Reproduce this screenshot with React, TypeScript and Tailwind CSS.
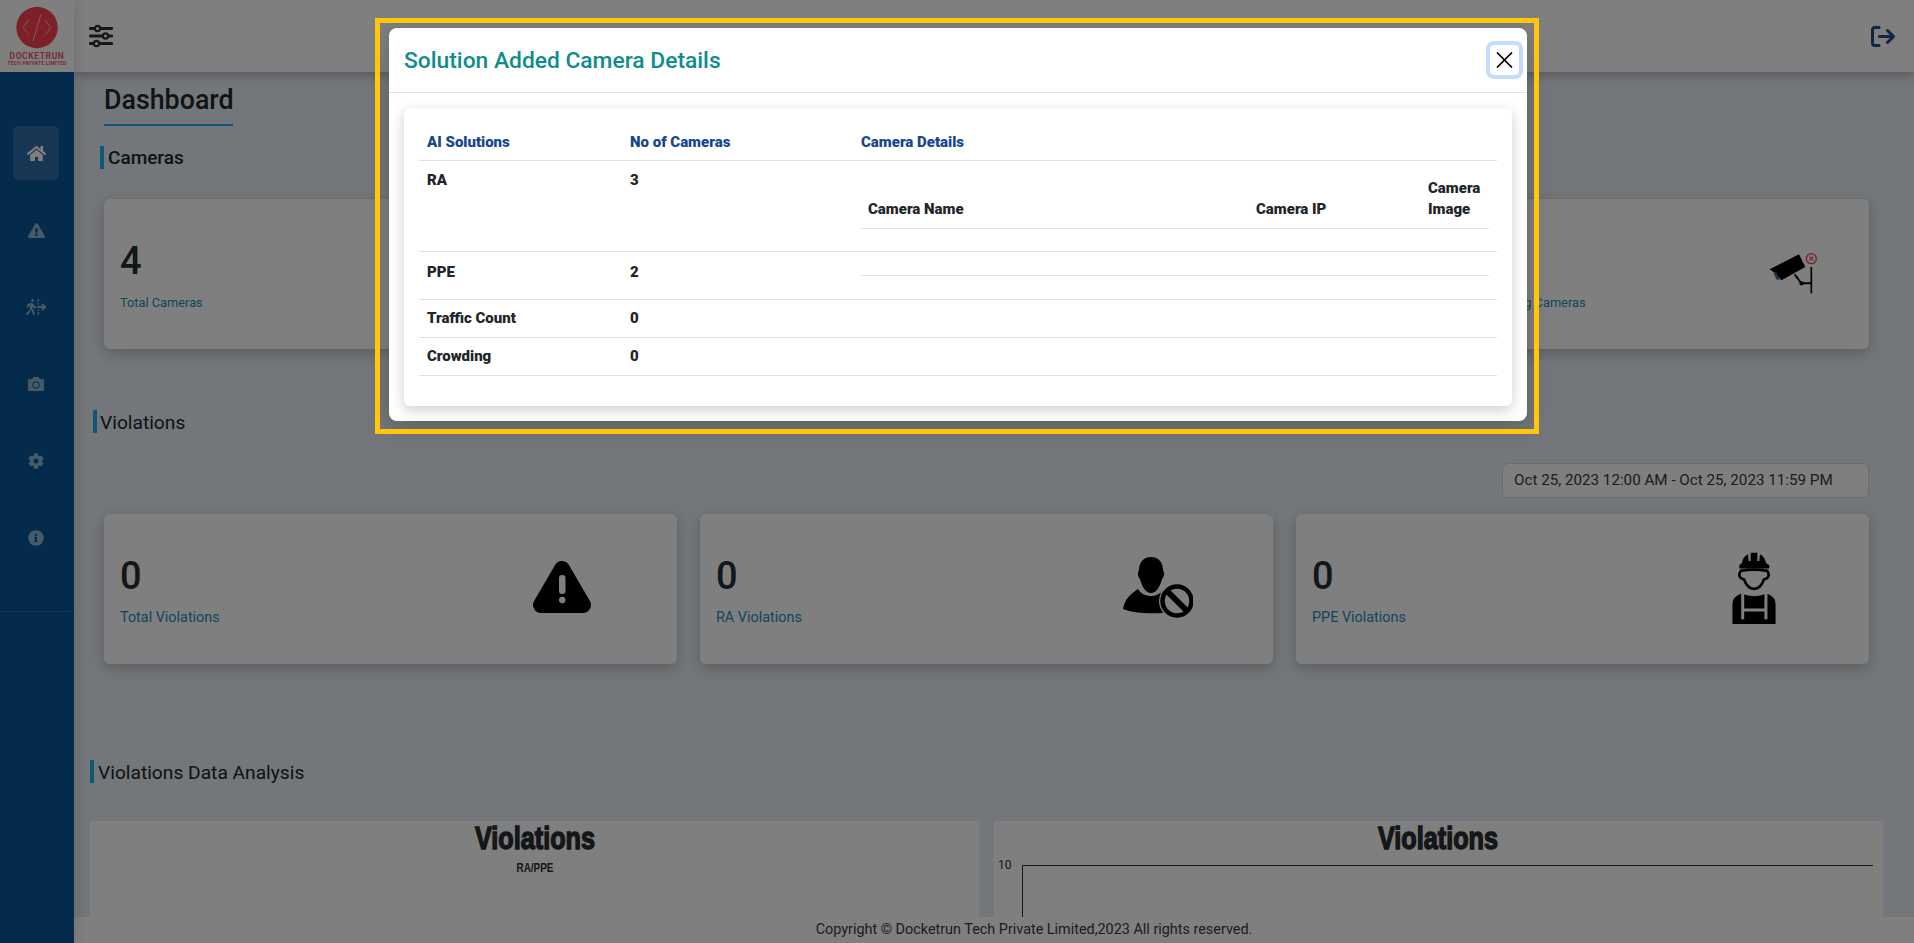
import React from "react";
import { FaHome, FaExclamationTriangle, FaCamera, FaCog, FaInfoCircle } from "react-icons/fa";
import { FaPersonWalkingDashedLineArrowRight } from "react-icons/fa6";

const font = { fontFamily: "Roboto, 'Liberation Sans', sans-serif" };

function Logo() {
  return (
    <div className="h-[72px] bg-white flex flex-col items-center overflow-hidden">
      <svg width="42" height="43" viewBox="0 0 42 43" className="mt-[6px] shrink-0">
        <circle cx="21" cy="21.5" r="20.7" fill="#fa4050" />
        <path d="M13 14 L7 21.5 L13 29 M29 14 L35 21.5 L29 29 M25 8 L17 35" fill="none" stroke="#fbb" strokeWidth="1" />
      </svg>
      <div className="text-[8.5px] leading-[9px] font-bold tracking-[0.6px] text-[#f0566a] mt-[3px] whitespace-nowrap">DOCKETRUN</div>
      <div className="text-[5px] leading-[5px] font-bold tracking-[0.25px] text-[#f0566a] whitespace-nowrap">TECH PRIVATE LIMITED</div>
    </div>
  );
}

function Sidebar() {
  const cls = "w-[46px] h-[54px] flex items-center justify-center rounded-md";
  return (
    <aside className="w-[74px] shrink-0 bg-[#085498] relative z-20 shadow-[2px_0_14px_rgba(0,0,0,0.12)] flex flex-col">
      <Logo />
      <nav className="pt-[54px] pl-[13px] flex flex-col gap-[23px]">
        <div className={cls + " bg-white/15 text-white"}><FaHome size={19} /></div>
        <div className={cls + " text-white/55"}><FaExclamationTriangle size={17} /></div>
        <div className={cls + " text-white/55"}><FaPersonWalkingDashedLineArrowRight size={20} /></div>
        <div className={cls + " text-white/55"}><FaCamera size={16} /></div>
        <div className={cls + " text-white/55"}><FaCog size={16} /></div>
        <div className={cls + " text-white/55"}><FaInfoCircle size={16} /></div>
      </nav>
      <div className="mt-[46px] border-t border-white/15" />
    </aside>
  );
}

function SectionTitle({ children, className }: { children: React.ReactNode; className: string }) {
  return (
    <div className={"flex items-center h-[23px] border-l-4 border-[#1eb0e8] leading-[23px] text-[#202428] " + className}>
      {children}
    </div>
  );
}

function WarningIcon() {
  return (
    <svg width="58" height="52" viewBox="0 0 58 52">
      <path d="M29 8 L8 44 L50 44 Z" fill="#000" stroke="#000" strokeWidth="16" strokeLinejoin="round" />
      <rect x="26" y="14" width="6.5" height="19" rx="3" fill="#fff" />
      <circle cx="29.2" cy="39" r="3.2" fill="#fff" />
    </svg>
  );
}

function PersonBanIcon() {
  return (
    <svg width="70" height="61" viewBox="0 0 70 61">
      <path d="M28 0 C36 0 40 6 40 13 C42 16 41 20 39 22 C37 30 33 36 28 36 C23 36 19 30 17 22 C15 20 14 16 16 13 C16 6 20 0 28 0 Z" fill="#000" />
      <path d="M0 52 C2 41 8 37 15 32 C18 37 23 39 28 39 C33 39 37 37 40 33 C44 36 48 38 50 40 L40 56 C25 57 10 56 0 52 Z" fill="#000" />
      <ellipse cx="54" cy="44" rx="18" ry="18.5" fill="#fff" />
      <ellipse cx="54" cy="44" rx="14.5" ry="14.5" fill="#fff" stroke="#000" strokeWidth="4.5" />
      <path d="M44 34 L64 54" stroke="#000" strokeWidth="6" />
    </svg>
  );
}

function WorkerIcon() {
  return (
    <svg width="44" height="72" viewBox="67 35 130 217">
      <path d="M88 85 L178 85 L178 75 Q172 70 168 68 Q165 50 150 42 L148 62 L142 62 L142 37 L122 37 L122 62 L116 62 L114 42 Q98 50 96 68 Q90 72 88 75 Z" fill="#000" />
      <path d="M92 92 Q80 112 102 118 Q112 146 132 146 Q152 146 162 118 Q184 112 172 92 Q132 84 92 92 Z" fill="none" stroke="#000" strokeWidth="8" />
      <path d="M67 252 V190 Q67 170 95 160 Q132 176 170 160 Q197 170 197 190 V252 Z" fill="#000" />
      <path d="M98 155 V238 M168 155 V238 M98 210 H168" fill="none" stroke="#fff" strokeWidth="9" />
    </svg>
  );
}

function CameraIcon() {
  return (
    <svg width="50" height="44" viewBox="25 30 150 132">
      <path d="M30 85 L118 40 L137 78 L65 118 L45 95 Z" fill="#000" />
      <path d="M42 97 L50 94 L60 118 L50 115 Z" fill="#2a6cb0" />
      <path d="M105 100 L125 127 L155 127" fill="none" stroke="#000" strokeWidth="6" />
      <circle cx="126" cy="127" r="6.5" fill="#000" />
      <path d="M155 78 V157" stroke="#000" strokeWidth="5" />
      <circle cx="155" cy="53" r="15" fill="none" stroke="#f04050" strokeWidth="4" />
      <path d="M149 47 L161 59 M161 47 L149 59" stroke="#f04050" strokeWidth="3.5" />
    </svg>
  );
}

function StatCard({ value, label, small, icon, iconClass }: { value?: string; label?: string; small?: boolean; icon?: React.ReactNode; iconClass?: string }) {
  return (
    <div className="h-[150px] bg-white rounded-md shadow-[0_4px_14px_rgba(0,0,0,0.22)] flex justify-between items-start pl-[16px]">
      <div>
        <div className="text-[38px] leading-[48px] pt-[38px] box-content h-[48px] font-medium text-[#282c30]">{value}</div>
        <div className={(small ? "text-[12.8px]" : "text-[14.4px]") + " mt-[8px] leading-[20px] text-[#1e8cb8] whitespace-nowrap"}>{label}</div>
      </div>
      {icon && <div className={iconClass}>{icon}</div>}
    </div>
  );
}

function ChartTitle({ x }: { x: number }) {
  return (
    <text x={x} y="28" textAnchor="middle" fontFamily="'Liberation Sans', sans-serif" fontWeight="700" fontSize="31" textLength="120" lengthAdjust="spacingAndGlyphs" stroke="#282c30" strokeWidth="1.4" fill="#282c30">
      Violations
    </text>
  );
}

function Content() {
  return (
    <div className="flex-1 min-h-0 overflow-hidden pr-[45px]">
      <div className="ml-[30px] mt-[10px] w-[129px] h-[44px] border-b-2 border-[#1eb0e8] text-[26.8px] leading-[36px] font-medium text-[#23272b] whitespace-nowrap">Dashboard</div>

      <SectionTitle className="ml-[26px] mt-[20px] pl-[4px] font-medium text-[19px]">Cameras</SectionTitle>
      <div className="ml-[30px] mt-[30px] grid grid-cols-4 gap-[23px]">
        <StatCard value="4" label="Total Cameras" small />
        <StatCard />
        <StatCard />
        <StatCard label="Not Working Cameras" small icon={<CameraIcon />} iconClass="mr-[51px] mt-[52px]" />
      </div>

      <SectionTitle className="ml-[19px] mt-[61px] pl-[3px] pt-[2px] text-[19.2px]">Violations</SectionTitle>

      <div className="flex justify-end mt-[30px]">
        <div className="w-[367px] h-[35px] bg-white border border-[#d5d8dc] rounded-md flex items-center pl-[11px] text-[15.2px] text-[#343a40] whitespace-nowrap">
          Oct 25, 2023 12:00 AM - Oct 25, 2023 11:59 PM
        </div>
      </div>

      <div className="ml-[30px] mt-[16px] grid grid-cols-3 gap-[23px]">
        <StatCard value="0" label="Total Violations" icon={<WarningIcon />} iconClass="mr-[86px] mt-[47px]" />
        <StatCard value="0" label="RA Violations" icon={<PersonBanIcon />} iconClass="mr-[80px] mt-[43px]" />
        <StatCard value="0" label="PPE Violations" icon={<WorkerIcon />} iconClass="mr-[93px] mt-[38px]" />
      </div>

      <SectionTitle className="ml-[16px] mt-[96px] pl-[4px] pt-[2px] text-[19.2px]">Violations Data Analysis</SectionTitle>

      <div className="ml-[16px] -mr-[14px] mt-[38px] flex gap-[15px]">
        <div className="w-[889px] h-[200px] bg-white">
          <svg width="889" height="200" viewBox="0 0 889 200">
            <ChartTitle x={445} />
            <text x="445" y="51" textAnchor="middle" fontFamily="'Liberation Sans', sans-serif" fontWeight="700" fontSize="12" textLength="37" lengthAdjust="spacingAndGlyphs" fill="#282c30">RA/PPE</text>
          </svg>
        </div>
        <div className="w-[889px] h-[200px] bg-white">
          <svg width="889" height="200" viewBox="0 0 889 200">
            <ChartTitle x={444} />
            <text x="4" y="48" fontFamily="Roboto, sans-serif" fontSize="12" fill="#282c30">10</text>
            <path d="M28.5 44.5 H879" stroke="#333" strokeWidth="1" fill="none" />
            <path d="M28.5 44 V200" stroke="#333" strokeWidth="1" fill="none" />
          </svg>
        </div>
      </div>
    </div>
  );
}

function CameraModal() {
  const th = "h-[38px] border-b border-[#dee2e6] px-2 pt-[2px] align-middle text-left font-black text-[15px] leading-[21px] text-[#14478f]";
  const td = "border-b border-[#dee2e6] px-2 align-top font-black text-[15px] leading-[21px] text-[#212529]";
  const nth = "h-[60px] border-b border-[#dee2e6] py-2 pl-[7px] pr-0 align-bottom text-left font-black text-[15px] leading-[21px] text-[#212529]";
  return (
    <div className="absolute left-[389px] top-[28px] w-[1138px] h-[393px] bg-white rounded-lg z-40 flex flex-col shadow-[0_6px_24px_rgba(0,0,0,0.2)]">
      <div className="h-[65px] shrink-0 border-b border-[#dee2e6] flex items-center justify-between pl-[15px] pr-[4px]">
        <h5 className="text-[22.8px] leading-[30px] pt-[1px] font-medium text-[#0f8c8c]">Solution Added Camera Details</h5>
        <button className="w-[37px] h-[38px] rounded-lg border-4 border-[#c2dbfe] flex items-center justify-center bg-white">
          <svg width="17" height="16" viewBox="0 0 17 16"><path d="M1 .5 L16 15.500 M16 .5 L1 15.500" stroke="#000" strokeWidth="1.7" /></svg>
        </button>
      </div>
      <div className="p-[15px] flex-1">
        <div className="h-[298px] bg-white rounded-md shadow-[0_4px_14px_rgba(0,0,0,0.2)] p-[15px]">
          <table className="w-[1078px] table-fixed border-separate border-spacing-0">
            <colgroup>
              <col className="w-[203px]" />
              <col className="w-[231px]" />
              <col />
            </colgroup>
            <thead>
              <tr>
                <th className={th}>AI Solutions</th>
                <th className={th}>No of Cameras</th>
                <th className={th}>Camera Details</th>
              </tr>
            </thead>
            <tbody>
              <tr>
                <td className={td + " h-[91px] pt-[9px]"}>RA</td>
                <td className={td + " pt-[9px]"}>3</td>
                <td className={td + " pt-2"}>
                  <table className="w-[628px] table-fixed border-separate border-spacing-0">
                    <colgroup>
                      <col className="w-[388px]" />
                      <col className="w-[172px]" />
                      <col />
                    </colgroup>
                    <thead>
                      <tr>
                        <th className={nth}>Camera Name</th>
                        <th className={nth}>Camera IP</th>
                        <th className={nth}>Camera Image</th>
                      </tr>
                    </thead>
                  </table>
                </td>
              </tr>
              <tr>
                <td className={td + " h-[48px] pt-[10px]"}>PPE</td>
                <td className={td + " pt-[10px]"}>2</td>
                <td className={td + " pt-2"}><div className="h-[16px] border-b border-[#dee2e6]" /></td>
              </tr>
              <tr>
                <td className={td + " h-[38px] pt-2"}>Traffic Count</td>
                <td className={td + " pt-2"}>0</td>
                <td className={td + " pt-2"}></td>
              </tr>
              <tr>
                <td className={td + " h-[38px] pt-2"}>Crowding</td>
                <td className={td + " pt-2"}>0</td>
                <td className={td + " pt-2"}></td>
              </tr>
            </tbody>
          </table>
        </div>
      </div>
    </div>
  );
}

export default function App() {
  return (
    <div className="relative h-screen w-full overflow-hidden flex bg-[#e6edf4]" style={font}>
      <Sidebar />
      <main className="flex-1 min-w-0 flex flex-col">
        <header className="h-[72px] shrink-0 bg-white relative z-10 shadow-[0_3px_10px_rgba(0,0,0,0.25)] flex items-center justify-between pl-[15px] pr-[19px]">
          <svg width="24" height="24" viewBox="0 0 24 24" fill="none" stroke="#2a2e33" strokeWidth="2.8" strokeLinecap="round">
            <path d="M1 4.500 H23 M1 12 H23 M1 19.500 H23" />
            <circle cx="8.500" cy="4.500" r="2.600" fill="#fff" strokeWidth="2.200" />
            <circle cx="16.500" cy="12" r="2.600" fill="#fff" strokeWidth="2.200" />
            <circle cx="7.500" cy="19.500" r="2.600" fill="#fff" strokeWidth="2.200" />
          </svg>
          <svg width="24" height="21" viewBox="0 0 24 21" fill="none" stroke="#1c4a8c" strokeWidth="3" strokeLinecap="round" strokeLinejoin="round">
            <path d="M8 1.500 H4 Q1.500 1.500 1.500 4 V17 Q1.500 19.500 4 19.500 H8" />
            <path d="M8.500 10.500 H22.500 M16.500 4.500 L22.500 10.500 L16.500 16.500" />
          </svg>
        </header>
        <Content />
        <footer className="h-[26px] shrink-0 bg-white flex items-center justify-center pl-[80px] text-[14.4px] text-[#343a40] relative z-10">
          Copyright © Docketrun Tech Private Limited,2023 All rights reserved.
        </footer>
      </main>

      <div className="absolute inset-0 bg-black/50 z-30" />
      <CameraModal />
      <div className="absolute left-[375px] top-[18px] w-[1164px] h-[416px] border-[5px] border-[#ffc60b] z-50 pointer-events-none" />
    </div>
  );
}
